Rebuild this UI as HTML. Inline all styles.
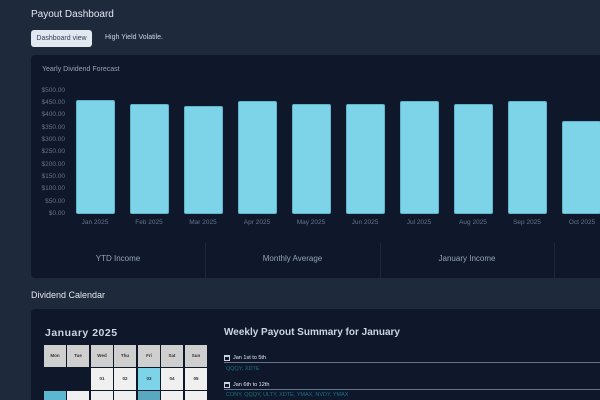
<!DOCTYPE html>
<html style="width:600px;height:400px;overflow:hidden"><head><style>
*{margin:0;padding:0;box-sizing:border-box}
body{width:600px;height:400px;overflow:hidden;background:#1e293b;font-family:"Liberation Sans",sans-serif;position:relative;color:#e2e8f0}
.a{position:absolute;white-space:nowrap}
.bar{position:absolute;background:#7dd3e8;border:1px solid #5fb6cc;border-radius:2px;width:39px;bottom:186px}
.yl{position:absolute;left:34px;width:31px;text-align:right;font-size:6.5px;color:#64748b}
.ml{position:absolute;top:219px;font-size:6.5px;color:#64748b;width:54px;text-align:center}
.c{position:absolute;width:22px;height:22px;font-size:4.5px;color:#333;text-align:center;line-height:22px;font-weight:bold}
.h{background:#cfcfcf}
.w{background:#f0f0f0}
</style></head><body>
<div class="a" style="left:31px;top:9px;font-size:10px;color:#e2e8f0">Payout Dashboard</div>
<div class="a" style="left:31px;top:30px;width:61px;height:17px;background:#e2e8f0;border-radius:3px;font-size:7px;color:#334155;line-height:17px;text-align:center">Dashboard view</div>
<div class="a" style="left:105px;top:34px;font-size:7px;color:#cbd5e1">High Yield Volatile.</div>
<div class="a" style="left:31px;top:55px;width:569px;height:223px;background:#0f172a;border-radius:4px 0 0 4px"></div>
<div class="a" style="left:42px;top:66px;font-size:7px;color:#94a3b8">Yearly Dividend Forecast</div>
<div class="yl" style="top:87px">$500.00</div><div class="yl" style="top:99px">$450.00</div><div class="yl" style="top:111px">$400.00</div><div class="yl" style="top:124px">$350.00</div><div class="yl" style="top:136px">$300.00</div><div class="yl" style="top:148px">$250.00</div><div class="yl" style="top:161px">$200.00</div><div class="yl" style="top:173px">$150.00</div><div class="yl" style="top:185px">$100.00</div><div class="yl" style="top:198px">$50.00</div><div class="yl" style="top:210px">$0.00</div>
<div class="bar" style="left:76px;top:100px"></div>
<div class="bar" style="left:130px;top:104px"></div>
<div class="bar" style="left:184px;top:106px"></div>
<div class="bar" style="left:238px;top:101px"></div>
<div class="bar" style="left:292px;top:104px"></div>
<div class="bar" style="left:346px;top:104px"></div>
<div class="bar" style="left:400px;top:101px"></div>
<div class="bar" style="left:454px;top:104px"></div>
<div class="bar" style="left:508px;top:101px"></div>
<div class="bar" style="left:562px;top:121px"></div>
<div class="ml" style="left:68px">Jan 2025</div><div class="ml" style="left:122px">Feb 2025</div><div class="ml" style="left:176px">Mar 2025</div><div class="ml" style="left:230px">Apr 2025</div><div class="ml" style="left:284px">May 2025</div><div class="ml" style="left:338px">Jun 2025</div><div class="ml" style="left:392px">Jul 2025</div><div class="ml" style="left:446px">Aug 2025</div><div class="ml" style="left:500px">Sep 2025</div><div class="ml" style="left:555px">Oct 2025</div>
<div class="a" style="left:205px;top:243px;width:1px;height:35px;background:#1e293b"></div>
<div class="a" style="left:380px;top:243px;width:1px;height:35px;background:#1e293b"></div>
<div class="a" style="left:554px;top:243px;width:1px;height:35px;background:#1e293b"></div>
<div class="a" style="left:31px;top:254px;width:174px;text-align:center;font-size:8px;color:#94a3b8">YTD Income</div>
<div class="a" style="left:205px;top:254px;width:175px;text-align:center;font-size:8px;color:#94a3b8">Monthly Average</div>
<div class="a" style="left:380px;top:254px;width:174px;text-align:center;font-size:8px;color:#94a3b8">January Income</div>
<div class="a" style="left:31px;top:290px;font-size:9px;color:#e2e8f0">Dividend Calendar</div>
<div class="a" style="left:31px;top:309px;width:569px;height:91px;background:#0f172a;border-radius:4px 0 0 0;overflow:hidden">
<div class="a" style="left:14px;top:18px;font-size:10.5px;font-weight:bold;color:#cbd5e1;letter-spacing:.5px">January 2025</div>
<div class="c h" style="left:13px;top:36px">Mon</div><div class="c h" style="left:36px;top:36px">Tue</div><div class="c h" style="left:60px;top:36px">Wed</div><div class="c h" style="left:83px;top:36px">Thu</div><div class="c h" style="left:107px;top:36px">Fri</div><div class="c h" style="left:130px;top:36px">Sat</div><div class="c h" style="left:154px;top:36px">Sun</div>
<div class="c w" style="left:60px;top:59px">01</div><div class="c w" style="left:83px;top:59px">02</div><div class="c" style="left:107px;top:59px;background:#7dd3e8">03</div><div class="c w" style="left:130px;top:59px">04</div><div class="c w" style="left:154px;top:59px">05</div>
<div class="c" style="left:13px;top:82px;background:#5cb8d0"></div><div class="c w" style="left:36px;top:82px"></div><div class="c w" style="left:60px;top:82px"></div><div class="c w" style="left:83px;top:82px"></div><div class="c" style="left:107px;top:82px;background:#5aa8c0"></div><div class="c w" style="left:130px;top:82px"></div><div class="c w" style="left:154px;top:82px"></div>
<div class="a" style="left:193px;top:18px;font-size:10px;font-weight:bold;color:#cbd5e1">Weekly Payout Summary for January</div>
<div class="a" style="left:193px;top:46px;width:6px;height:6px;border:1px solid #cbd5e1;border-top-width:2px"></div>
<div class="a" style="left:202px;top:46px;font-size:5.5px;color:#e2e8f0">Jan 1st to 5th</div>
<div class="a" style="left:193px;top:53px;width:376px;height:1px;background:#64748b"></div>
<div class="a" style="left:195px;top:57px;font-size:5.5px;color:#1e6f8a">QQQY, XDTE</div>
<div class="a" style="left:193px;top:73px;width:6px;height:6px;border:1px solid #cbd5e1;border-top-width:2px"></div>
<div class="a" style="left:202px;top:73px;font-size:5.5px;color:#e2e8f0">Jan 6th to 12th</div>
<div class="a" style="left:193px;top:80px;width:376px;height:1px;background:#64748b"></div>
<div class="a" style="left:195px;top:83px;font-size:5.5px;color:#1e6f8a">CONY, QQQY, ULTY, XDTE, YMAX, NVDY, YMAX</div>
</div>
</body></html>
